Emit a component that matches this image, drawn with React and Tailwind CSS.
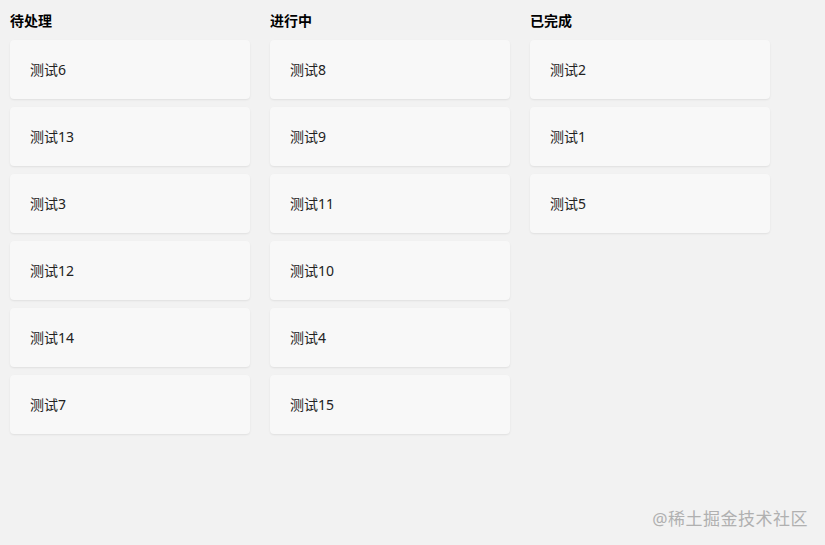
import React from 'react';

const columns = [
    { title: '待处理', items: ['测试6', '测试13', '测试3', '测试12', '测试14', '测试7'] },
    { title: '进行中', items: ['测试8', '测试9', '测试11', '测试10', '测试4', '测试15'] },
    { title: '已完成', items: ['测试2', '测试1', '测试5'] },
];

const App = () => {
    return (
        <div
            className="relative w-[825px] h-[545px] overflow-hidden bg-[#f2f2f2] text-[#222]"
            style={{ fontFamily: '"Noto Sans", "Noto Sans CJK SC", sans-serif' }}
        >
            <div className="flex gap-5 px-[10px] pt-[11px]">
                {columns.map(col => (
                    <div key={col.title} className="w-[240px] flex flex-col">
                        <h3 className="text-[14px] font-bold leading-[20px] text-black mb-[9px]">{col.title}</h3>
                        <div className="flex flex-col gap-2">
                            {col.items.map(item => (
                                <div
                                    key={item}
                                    className="h-[59px] flex items-center px-5 bg-[#f8f8f8] rounded-[4px] shadow-[0_1px_2px_rgba(0,0,0,0.08)] text-[14px]"
                                >
                                    {item}
                                </div>
                            ))}
                        </div>
                    </div>
                ))}
            </div>
            <div className="absolute right-[17px] bottom-[14px] text-[17px] text-[#b0b0b0] tracking-[0.5px]">
                @稀土掘金技术社区
            </div>
        </div>
    );
};

export default App;
